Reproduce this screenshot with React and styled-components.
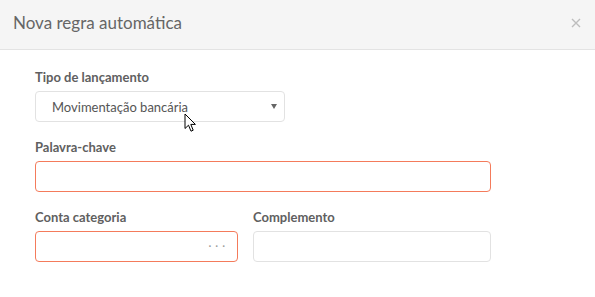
import React from "react"
import styled, { createGlobalStyle } from "styled-components"

const GlobalStyle = createGlobalStyle`
  html, body {
    margin: 0;
    padding: 0;
    background: #fff;
    font-family: Lato, "Open Sans", sans-serif;
  }
  * { box-sizing: border-box; }
`;

const Modal = styled.div`
  position: relative;
  width: 595px;
  height: 297px;
  background: #fff;
`;

const Header = styled.div`
  height: 50px;
  background: #f5f5f5;
  border-bottom: 1px solid #e3e3e3;
  display: flex;
  align-items: center;
  justify-content: space-between;
  padding: 0 14px 4px 13px;
`;

const Title = styled.h3`
  margin: 0;
  font-size: 17px;
  font-weight: 400;
  color: #666;
`;

const Close = styled.button`
  border: 0;
  background: none;
  padding: 0;
  width: 10px;
  height: 10px;
  display: flex;
  cursor: pointer;
`;

const Body = styled.div`
  padding: 18px 0 0 35px;
`;

const Group = styled.div`
  margin-bottom: 16px;
  width: ${p => p.$width || "auto"};
`;

const Row = styled.div`
  display: grid;
  grid-template-columns: 203px 238px;
  column-gap: 15px;
`;

const Label = styled.label`
  display: block;
  font-size: 13px;
  line-height: 18px;
  font-weight: 700;
  color: #606060;
  margin-bottom: 5px;
`;

const Field = styled.div`
  position: relative;
  height: 31px;
  border: 1px solid ${p => (p.$error ? "#f47b5b" : "#e2e2e2")};
  border-radius: 4px;
  background: #fff;
  display: flex;
  align-items: center;
  padding: 0 6px 0 16px;
  font-size: 13px;
  color: #555;
`;

const Value = styled.span`
  flex: 1;
`;

const Arrow = styled.span`
  width: 0;
  height: 0;
  border-left: 3px solid transparent;
  border-right: 3px solid transparent;
  border-top: 5px solid #666;
  margin-right: 1px;
`;

const Dots = styled.span`
  margin-left: auto;
  margin-right: 2px;
  color: #999;
  font-size: 11px;
  letter-spacing: 4px;
  line-height: 1;
  margin-top: -2px;
`;

const Pointer = styled.svg`
  position: absolute;
  left: 184px;
  top: 113px;
`;

export default function App() {
  return (
    <>
      <GlobalStyle />
      <Modal>
        <Header>
          <Title>Nova regra automática</Title>
          <Close aria-label="Fechar">
            <svg width="10" height="10" viewBox="0 0 10 10">
              <path d="M1 1 L9 9 M9 1 L1 9" stroke="#bdbdbd" strokeWidth="1.4" />
            </svg>
          </Close>
        </Header>
        <Body>
          <Group $width="250px">
            <Label>Tipo de lançamento</Label>
            <Field>
              <Value>Movimentação bancária</Value>
              <Arrow />
            </Field>
          </Group>
          <Group $width="456px">
            <Label>Palavra-chave</Label>
            <Field $error />
          </Group>
          <Row>
            <Group>
              <Label>Conta categoria</Label>
              <Field $error>
                <Dots>···</Dots>
              </Field>
            </Group>
            <Group>
              <Label>Complemento</Label>
              <Field />
            </Group>
          </Row>
        </Body>
        <Pointer width="13" height="20" viewBox="0 0 13 20">
          <path
            d="M1 1 L1 15.5 L4.5 12.2 L7 18.2 L9.2 17.2 L6.8 11.4 L11.4 11.4 Z"
            fill="#fff"
            stroke="#000"
            strokeWidth="1"
            strokeLinejoin="miter"
          />
        </Pointer>
      </Modal>
    </>
  )
}
